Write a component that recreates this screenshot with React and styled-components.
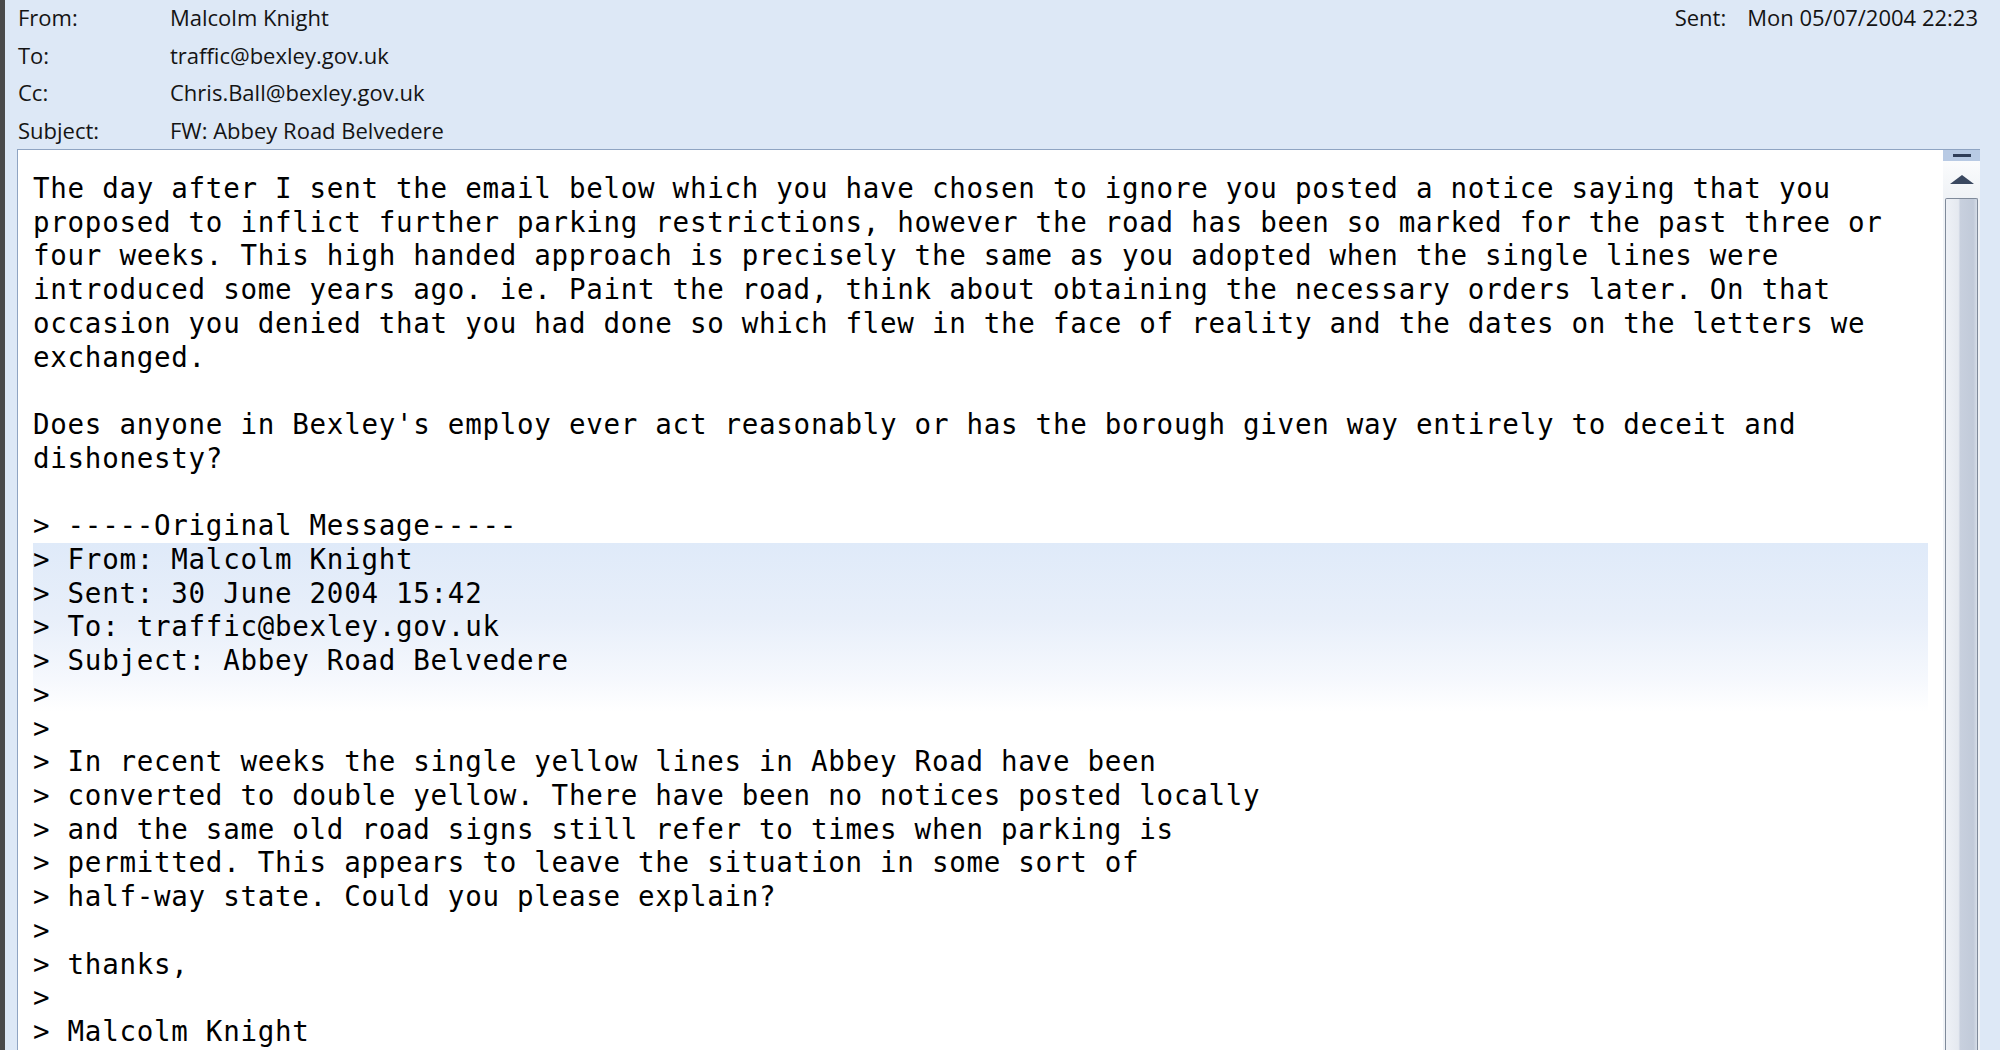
// App.jsx
import React from 'react';
import styled, { createGlobalStyle } from 'styled-components';

const GlobalStyle = createGlobalStyle`
  html, body {
    margin: 0;
    padding: 0;
    background-color: #dde8f6;
    overflow: hidden;
  }
`;

const Window = styled.div`
  display: flex;
  height: 100vh;
  border-left: 5px solid #4a4a4a;
  background-color: #dde8f6;
  box-sizing: border-box;
`;

const Main = styled.div`
  flex: 1;
  display: flex;
  flex-direction: column;
  padding: 0 18px 0 12px;
  min-width: 0;
`;

const Header = styled.div`
  display: flex;
  flex-direction: column;
  margin-top: -2px;
  font-family: 'Open Sans', 'Noto Sans', sans-serif;
  font-size: 22px;
  color: #141414;
`;

const HeaderRow = styled.div`
  display: flex;
  align-items: center;
  height: 37.75px;
  padding-left: 1px;
  white-space: nowrap;
`;

const Label = styled.span`
  width: 152px;
  flex-shrink: 0;
`;

const Value = styled.span``;

const SentBlock = styled.div`
  margin-left: auto;
  display: flex;
  gap: 21px;
  padding-right: 2px;
`;

const MessageBox = styled.div`
  flex: 1;
  display: flex;
  min-height: 0;
  background-color: #ffffff;
  border: 1px solid #8fa4c2;
  border-right: none;
  border-bottom: none;
  overflow: hidden;
`;

const Body = styled.div`
  flex: 1;
  padding: 22px 15px 0 15px;
  font-family: 'DejaVu Sans Mono', 'Liberation Mono', monospace;
  font-size: 27.5px;
  letter-spacing: 0.73px;
  line-height: 33.72px;
  color: #000000;
  white-space: pre;
  overflow: hidden;
`;

const Line = styled.div`
  height: 33.72px;
`;

const QuoteHeader = styled.div`
  background: linear-gradient(to bottom, #dfeaf9 0%, #e8effa 45%, #f5f8fd 80%, #ffffff 100%);
`;

const Scrollbar = styled.div`
  width: 37px;
  flex-shrink: 0;
  display: flex;
  flex-direction: column;
  background-color: #f0f3f7;
`;

const Grip = styled.div`
  height: 11px;
  display: flex;
  align-items: center;
  justify-content: center;
  background-color: #b8cae4;
`;

const GripDash = styled.div`
  width: 18px;
  height: 3px;
  background-color: #2f3d57;
`;

const ArrowButton = styled.div`
  height: 37px;
  display: flex;
  align-items: center;
  justify-content: center;
  background: linear-gradient(to bottom, #fbfcfd, #eff2f6);
`;

const Thumb = styled.div`
  flex: 1;
  margin: 0 2px 0 2px;
  border: 1px solid #7f8a9a;
  border-bottom: none;
  border-radius: 2px 2px 0 0;
  background: linear-gradient(
    to right,
    #eef1f6 0%,
    #e5e9f0 40%,
    #c8d0de 46%,
    #c1cad9 88%,
    #d6dde8 100%
  );
`;

const RightEdge = styled.div`
  width: 2px;
  flex-shrink: 0;
  background-color: #dde8f6;
`;

const intro = [
  'The day after I sent the email below which you have chosen to ignore you posted a notice saying that you',
  'proposed to inflict further parking restrictions, however the road has been so marked for the past three or',
  'four weeks. This high handed approach is precisely the same as you adopted when the single lines were',
  'introduced some years ago. ie. Paint the road, think about obtaining the necessary orders later. On that',
  'occasion you denied that you had done so which flew in the face of reality and the dates on the letters we',
  'exchanged.',
  '',
  "Does anyone in Bexley's employ ever act reasonably or has the borough given way entirely to deceit and",
  'dishonesty?',
  '',
  '> -----Original Message-----',
];

const quoteHeader = [
  '> From: Malcolm Knight',
  '> Sent: 30 June 2004 15:42',
  '> To: traffic@bexley.gov.uk',
  '> Subject: Abbey Road Belvedere',
  '>',
];

const rest = [
  '>',
  '> In recent weeks the single yellow lines in Abbey Road have been',
  '> converted to double yellow. There have been no notices posted locally',
  '> and the same old road signs still refer to times when parking is',
  '> permitted. This appears to leave the situation in some sort of',
  '> half-way state. Could you please explain?',
  '>',
  '> thanks,',
  '>',
  '> Malcolm Knight',
];

const renderLines = (lines) =>
  lines.map((text, i) => <Line key={i}>{text}</Line>);

const App = () => {
  return (
    <>
      <GlobalStyle />
      <Window>
        <Main>
          <Header>
            <HeaderRow>
              <Label>From:</Label>
              <Value>Malcolm Knight</Value>
              <SentBlock>
                <span>Sent:</span>
                <span>Mon 05/07/2004 22:23</span>
              </SentBlock>
            </HeaderRow>
            <HeaderRow>
              <Label>To:</Label>
              <Value>traffic@bexley.gov.uk</Value>
            </HeaderRow>
            <HeaderRow>
              <Label>Cc:</Label>
              <Value>Chris.Ball@bexley.gov.uk</Value>
            </HeaderRow>
            <HeaderRow>
              <Label>Subject:</Label>
              <Value>FW: Abbey Road Belvedere</Value>
            </HeaderRow>
          </Header>

          <MessageBox>
            <Body>
              {renderLines(intro)}
              <QuoteHeader>{renderLines(quoteHeader)}</QuoteHeader>
              {renderLines(rest)}
            </Body>
            <Scrollbar>
              <Grip>
                <GripDash />
              </Grip>
              <ArrowButton>
                <svg width="24" height="9" viewBox="0 0 24 9">
                  <polygon points="0,9 12,0 24,9" fill="#3a4860" />
                </svg>
              </ArrowButton>
              <Thumb />
            </Scrollbar>
          </MessageBox>
        </Main>
        <RightEdge />
      </Window>
    </>
  );
};

export default App;
